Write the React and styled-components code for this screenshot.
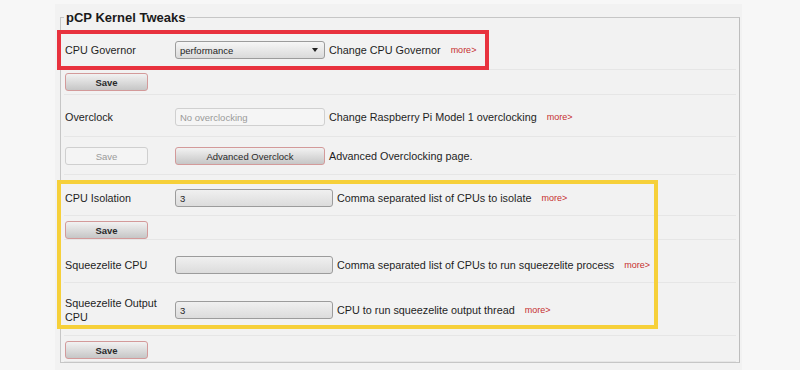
import React from "react";
import styled, { createGlobalStyle } from "styled-components";

const GlobalStyle = createGlobalStyle`
    body {
        margin: 0;
        background: #f7f7f7;
        font-family: "Liberation Sans", Arial, sans-serif;
        color: #1e1e1e;
    }
`;

const Screen = styled.div`
    position: relative;
    width: 800px;
    height: 370px;
    overflow: hidden;
`;

const Page = styled.div`
    margin-left: 55px;
    width: 687px;
    height: 366px;
    margin-top: 4px;
    background: #f2f2f2;
    overflow: hidden;
`;

const Fieldset = styled.fieldset`
    margin: 6px 2px 0 5px;
    padding: 5px 3px 0 3px;
    border: 1px solid #c6c6c6;
    border-right-color: #bdbdbd;
    min-width: 0;

    legend {
        padding: 0 2px;
        font-size: 13px;
        line-height: 15px;
        font-weight: bold;
        color: #1a1a1a;
    }
`;

const Row = styled.div`
    display: grid;
    grid-template-columns: 110px 1fr;
    align-items: center;
    align-content: start;
    box-sizing: border-box;
    height: ${({ $h }) => $h}px;
    padding: ${({ $pt }) => $pt}px 0 0 1px;
    border-bottom: 1px solid #e6e6e6;
`;

const Label = styled.div`
    font-size: 10.8px;
    line-height: 14px;
    padding-right: 8px;
`;

const Cell = styled.div`
    display: flex;
    align-items: center;
    white-space: nowrap;
`;

const SelectBox = styled.div`
    box-sizing: border-box;
    width: 150px;
    height: 18px;
    display: flex;
    align-items: center;
    justify-content: space-between;
    padding: 0 6px 0 4px;
    font-size: 9.5px;
    border: 1px solid #9c9c9c;
    border-radius: 3px;
    background: linear-gradient(#f6f6f6, #dadada);

    &::after {
        content: "";
        border-left: 3.5px solid transparent;
        border-right: 3.5px solid transparent;
        border-top: 4px solid #222;
    }
`;

const Input = styled.input`
    box-sizing: border-box;
    width: ${({ $w }) => $w}px;
    height: 18px;
    margin: 0;
    padding: 0 4px;
    font-family: inherit;
    font-size: 9.5px;
    color: #1e1e1e;
    border: 1px solid ${({ disabled }) => (disabled ? "#d0d0d0" : "#9c9c9c")};
    border-radius: 3px;
    background: ${({ disabled }) =>
        disabled ? "#f5f5f5" : "linear-gradient(#f0f0f0, #dcdcdc)"};
    outline: none;

    &::placeholder {
        color: #9a9a9a;
    }
`;

const Button = styled.button`
    box-sizing: border-box;
    width: ${({ $w }) => $w}px;
    height: 18px;
    margin: 0;
    padding: 0;
    font-family: inherit;
    font-size: 9.5px;
    font-weight: ${({ $bold }) => ($bold ? "bold" : "normal")};
    color: ${({ disabled }) => (disabled ? "#9a9a9a" : "#2a2a2a")};
    border: 1px solid ${({ disabled }) => (disabled ? "#cfcfcf" : "#d39a9a")};
    border-radius: 3px;
    background: ${({ disabled }) =>
        disabled ? "#f4f4f4" : "linear-gradient(#f2f2f2, #c6c6c6)"};
`;

const Desc = styled.span`
    margin-left: 4px;
    font-size: 10.8px;
`;

const More = styled.span`
    flex-shrink: 0;
    margin-left: 10px;
    font-size: 9px;
    color: #c62f2f;
`;

const Highlight = styled.div`
    position: absolute;
    box-sizing: border-box;
    border: 4px solid ${({ $color }) => $color};
    pointer-events: none;
`;

export default () => (
    <Screen>
        <GlobalStyle />
        <Page>
            <Fieldset>
                <legend>pCP Kernel Tweaks</legend>

                <Row $h={40} $pt={11}>
                    <Label>CPU Governor</Label>
                    <Cell>
                        <SelectBox>performance</SelectBox>
                        <Desc>Change CPU Governor</Desc>
                        <More>more&gt;</More>
                    </Cell>
                </Row>

                <Row $h={25} $pt={3}>
                    <Cell>
                        <Button $w={83} $bold>Save</Button>
                    </Cell>
                </Row>

                <Row $h={42} $pt={13}>
                    <Label>Overclock</Label>
                    <Cell>
                        <Input $w={150} disabled placeholder="No overclocking" />
                        <Desc>Change Raspberry Pi Model 1 overclocking</Desc>
                        <More>more&gt;</More>
                    </Cell>
                </Row>

                <Row $h={38} $pt={10}>
                    <Cell>
                        <Button $w={83} disabled>Save</Button>
                    </Cell>
                    <Cell>
                        <Button $w={150}>Advanced Overclock</Button>
                        <Desc>Advanced Overclocking page.</Desc>
                    </Cell>
                </Row>

                <Row $h={41} $pt={14}>
                    <Label>CPU Isolation</Label>
                    <Cell>
                        <Input $w={158} defaultValue="3" readOnly />
                        <Desc>Comma separated list of CPUs to isolate</Desc>
                        <More>more&gt;</More>
                    </Cell>
                </Row>

                <Row $h={24} $pt={5}>
                    <Cell>
                        <Button $w={83} $bold>Save</Button>
                    </Cell>
                </Row>

                <Row $h={43} $pt={16}>
                    <Label>Squeezelite CPU</Label>
                    <Cell>
                        <Input $w={158} defaultValue="" readOnly />
                        <Desc>Comma separated list of CPUs to run squeezelite process</Desc>
                        <More>more&gt;</More>
                    </Cell>
                </Row>

                <Row $h={53} $pt={13}>
                    <Label>Squeezelite Output CPU</Label>
                    <Cell>
                        <Input $w={158} defaultValue="3" readOnly />
                        <Desc>CPU to run squeezelite output thread</Desc>
                        <More>more&gt;</More>
                    </Cell>
                </Row>

                <Row $h={26} $pt={5}>
                    <Cell>
                        <Button $w={83} $bold>Save</Button>
                    </Cell>
                </Row>
            </Fieldset>
        </Page>

        <Highlight $color="#e8323e" style={{ left: 57, top: 30, width: 432, height: 40 }} />
        <Highlight $color="#f6d03a" style={{ left: 57, top: 180, width: 601, height: 149 }} />
    </Screen>
);
